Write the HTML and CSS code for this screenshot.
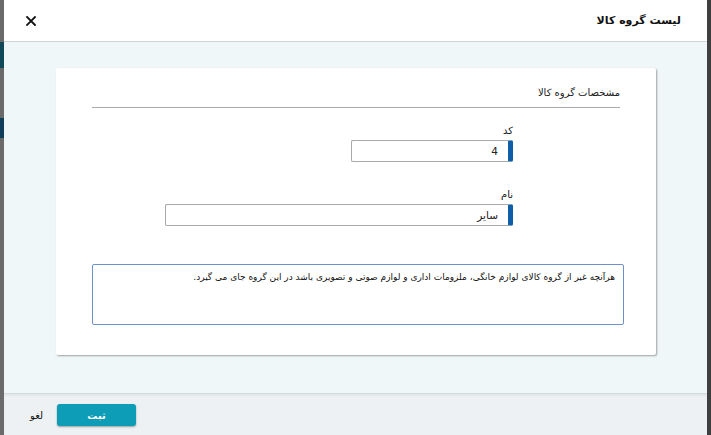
FILE: index.html
```html
<!DOCTYPE html>
<html lang="fa" dir="rtl">
<head>
<meta charset="utf-8">
<link rel="stylesheet" href="styles.css">
</head>
<body>
<div class="side side-right"></div>
<div class="modal">
  <header class="modal-header">
    <h1 class="modal-title">لیست گروه کالا</h1>
    <button class="close-btn" aria-label="close">
      <svg width="10" height="10" viewBox="0 0 10 10"><path d="M1 1 L9 9 M9 1 L1 9" stroke="#111" stroke-width="1.8" stroke-linecap="square"/></svg>
    </button>
  </header>
  <main class="modal-body">
    <section class="card">
      <div class="card-title">مشخصات گروه کالا</div>
      <div class="fields">
        <div class="field">
          <label class="field-label">کد</label>
          <div class="input input-short">4</div>
        </div>
        <div class="field field-name">
          <label class="field-label">نام</label>
          <div class="input input-long">سایر</div>
        </div>
      </div>
      <div class="textarea">هرآنچه غیر از گروه کالای لوازم خانگی، ملزومات اداری و لوازم صوتی و تصویری باشد در این گروه جای می گیرد.</div>
    </section>
  </main>
  <footer class="modal-footer">
    <button class="btn-submit">ثبت</button>
    <button class="btn-cancel">لغو</button>
  </footer>
</div>
<div class="side side-left"></div>
</body>
</html>
```
FILE: styles.css
```css
* { box-sizing: border-box; }
html, body { margin: 0; padding: 0; }
body {
  width: 711px;
  height: 435px;
  overflow: hidden;
  display: flex;
  flex-direction: row;
  background: #4b4b4b;
  font-family: "DejaVu Sans", "Noto Sans", sans-serif;
  font-size: 10px;
  color: #222;
}
.side { flex: 0 0 auto; }
.side-right { width: 4px; background: #3f3f3f; }
.side-left {
  width: 4px;
  background: linear-gradient(to bottom, #6a6a6a 0, #6a6a6a 42px, #0f4a5a 42px, #0f4a5a 68px, #6a6a6a 68px, #6a6a6a 118px, #0f3f5c 118px, #0f3f5c 138px, #6a6a6a 138px);
}
.modal {
  flex: 1;
  display: flex;
  flex-direction: column;
  background: #fff;
}
.modal-header {
  height: 42px;
  flex: 0 0 auto;
  display: flex;
  align-items: center;
  justify-content: space-between;
  padding: 0 26px 0 22px;
  border-bottom: 1px solid #cfd4d6;
  background: #fff;
}
.modal-title {
  margin: 0;
  font-size: 11px;
  font-weight: bold;
  color: #111;
}
.close-btn {
  border: 0;
  background: none;
  padding: 0;
  width: 10px;
  height: 10px;
  display: flex;
}
.modal-body {
  flex: 1;
  background: #eff7f9;
  padding: 26px 51px 38px 52px;
  display: flex;
}
.card {
  flex: 1;
  background: #fff;
  border-radius: 2px;
  box-shadow: 1px 1px 2px rgba(0,0,0,0.35);
  padding: 19px 36px 30px 36px;
  display: flex;
  flex-direction: column;
}
.card-title {
  font-size: 10px;
  color: #222;
  padding-bottom: 9px;
  border-bottom: 1px solid #a8a8a8;
}
.fields {
  padding-right: 107px;
  padding-top: 17px;
  display: flex;
  flex-direction: column;
  gap: 27px;
}
.field { display: flex; flex-direction: column; align-items: flex-start; }
.field-label { font-size: 10px; color: #111; margin-bottom: 4px; }
.input {
  height: 22px;
  border: 1px solid #a9a9a9;
  border-right: 5px solid #0f5ea8;
  border-radius: 2px;
  background: #fff;
  padding: 0 10px 0 6px;
  display: flex;
  align-items: center;
  font-size: 10.5px;
  color: #222;
}
.input-short { width: 162px; }
.input-long { width: 348px; }
.textarea {
  margin-top: 38px;
  margin-left: 0;
  margin-right: -4px;
  height: 61px;
  border: 1.5px solid #6d8fcc;
  border-radius: 2px;
  padding: 5px 8px;
  font-size: 9px;
  color: #111;
  line-height: 14px;
}
.modal-footer {
  flex: 0 0 auto;
  height: 43px;
  background: #edf1f4;
  border-top: 1px solid #d3dadd;
  box-shadow: inset 0 2px 2px rgba(0,0,0,0.04);
  display: flex;
  flex-direction: row-reverse;
  justify-content: flex-end;
  align-items: center;
  padding-left: 26px;
  gap: 14px;
  direction: ltr;
}
.btn-submit {
  width: 79px;
  height: 22px;
  border: 0;
  border-radius: 3px;
  background: #0e9db6;
  color: #fff;
  font-family: inherit;
  font-weight: bold;
  font-size: 10px;
  box-shadow: 0 1px 2px rgba(0,0,0,0.35);
}
.btn-cancel {
  border: 0;
  background: none;
  padding: 0;
  font-family: inherit;
  font-size: 10px;
  color: #111;
}
```
